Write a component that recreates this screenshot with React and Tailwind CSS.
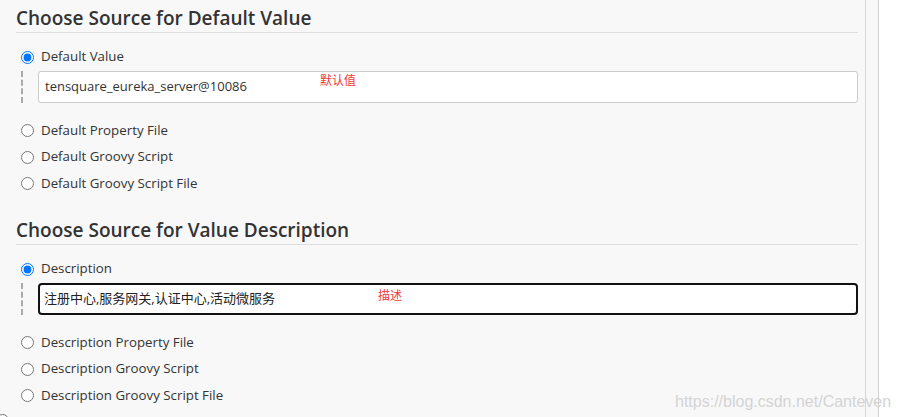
import React from "react";

const font = { fontFamily: '"Open Sans", "Noto Sans CJK SC", sans-serif' };

const Radio = ({ label, checked }) => (
  <label className="flex items-center h-[26.5px] pl-[5px] text-[13.3px] text-[#333]">
    <input
      type="radio"
      defaultChecked={checked}
      className="m-0 w-[13px] h-[13px] accent-[#0075ff]"
    />
    <span className="ml-[7px]">{label}</span>
  </label>
);

const Field = ({ value, note, notePos, focused }) => (
  <div className="flex pl-[5px]">
    <div className="w-0 border-l-2 border-dashed border-[#aaa]" />
    <div
      className={
        focused
          ? "relative flex-1 ml-[15px] h-[32px] bg-white border-2 border-[#111] rounded-[4px] flex items-center pl-[4px] text-[13px] text-[#222]"
          : "relative flex-1 ml-[15px] h-[32px] bg-white border border-[#ccc] rounded-[3px] flex items-center pl-[6px] text-[13px] text-[#333]"
      }
    >
      {value}
      <span className={`absolute ${notePos} text-[12px] text-[#f03a3a]`}>
        {note}
      </span>
    </div>
  </div>
);

const Heading = ({ children }) => (
  <h2 className="text-[19px] font-semibold text-[#333] leading-[28px] border-b border-[#ddd]">
    {children}
  </h2>
);

export default function App() {
  return (
    <div className="relative flex w-[900px] h-[417px] overflow-hidden bg-white" style={font}>
      <div className="w-[866px] h-full bg-[#f8f8f8] border-r border-[#d6d6d6] pl-4 pr-[7px] pt-1">
        <Heading>Choose Source for Default Value</Heading>
        <div className="mt-[11px]">
          <Radio label="Default Value" checked />
          <Field
            value="tensquare_eureka_server@10086"
            note="默认值"
            notePos="left-[281px] top-[0px]"
          />
          <div className="mt-[15px]">
            <Radio label="Default Property File" />
            <Radio label="Default Groovy Script" />
            <Radio label="Default Groovy Script File" />
          </div>
        </div>

        <div className="mt-[19px]">
          <Heading>Choose Source for Value Description</Heading>
        </div>
        <div className="mt-[11px]">
          <Radio label="Description" checked />
          <Field
            value="注册中心,服务网关,认证中心,活动微服务"
            note="描述"
            notePos="left-[338px] top-[2px]"
            focused
          />
          <div className="mt-[15px]">
            <Radio label="Description Property File" />
            <Radio label="Description Groovy Script" />
            <Radio label="Description Groovy Script File" />
          </div>
          <div className="-ml-[20px] mt-[5px] w-[13px] h-[13px] rounded-full border border-[#767676] bg-white" />
        </div>
      </div>
      <div className="w-[13px] h-full bg-[#f8f8f8] border-r border-[#d0d0d0]" />
      <span
        className="absolute left-[675px] top-[390px] text-[16px] text-[#d4d4d4]"
        style={{ fontFamily: '"Liberation Sans", sans-serif' }}
      >
        https://blog.csdn.net/Canteven
      </span>
    </div>
  );
}
